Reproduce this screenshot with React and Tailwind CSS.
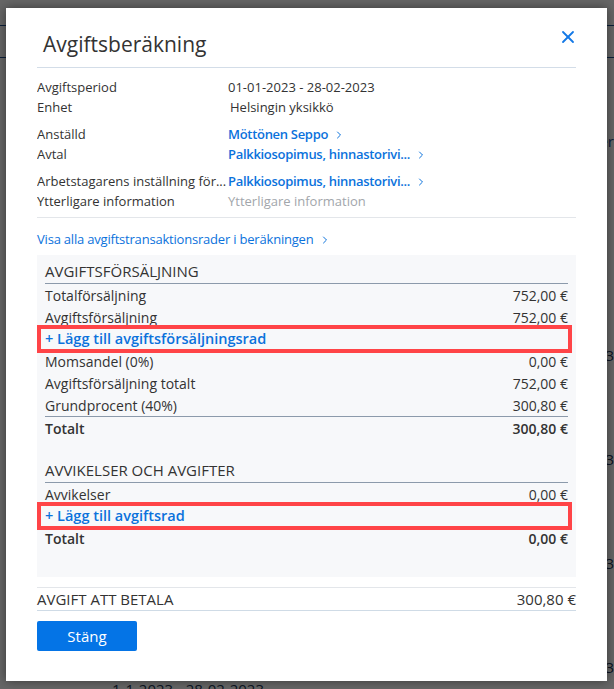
import { ChevronRight, X } from "lucide-react";

const info = [
  [
    { label: "Avgiftsperiod", value: "01-01-2023 - 28-02-2023" },
    { label: "Enhet", value: "Helsingin yksikkö", indent: true },
  ],
  [
    { label: "Anställd", value: "Möttönen Seppo", link: true },
    { label: "Avtal", value: "Palkkiosopimus, hinnastorivi...", link: true },
  ],
  [
    { label: "Arbetstagarens inställning för...", value: "Palkkiosopimus, hinnastorivi...", link: true },
    { label: "Ytterligare information", value: "Ytterligare information", muted: true },
  ],
];

const Row = ({ label, amount, bold = false }) => (
  <div className={`flex h-[22px] items-center justify-between text-[14px] ${bold ? "font-semibold" : ""}`}>
    <span>{label}</span>
    <span>{amount}</span>
  </div>
);

// red outlined "add row" action
const AddRow = ({ text }) => (
  <div className="relative flex h-[22px] items-center">
    <div className="pointer-events-none absolute -top-[3px] -bottom-[3px] -left-[8px] -right-[4px] border-[4px] border-[#ff4447]" />
    <span className="text-[14.5px] font-semibold text-[#0b72dc]">+ Lägg till {text}</span>
  </div>
);

const Heading = ({ children }) => (
  <div className="flex h-[24px] items-center border-b border-[#8c9aab] text-[15px] uppercase">
    {children}
  </div>
);

export default function App() {
  return (
    <div className="relative h-[689px] w-[614px] overflow-hidden bg-white font-['Open_Sans',sans-serif] text-[#333]">
      {/* page behind the dialog */}
      <div className="flex flex-col">
        <div className="h-[25px]" />
        <div className="h-[1px] bg-[#1d4e8f]" />
        <div className="h-[31px]" />
        <div className="h-[1px] bg-[#1d4e8f]" />
        <div className="flex h-[94px] items-end justify-end text-[15px] text-[#1d4e8f]">er</div>
        <div className="h-[110px]" />
        {[0, 1, 2, 3].map((i) => (
          <div key={i} className="flex h-[104px] items-end justify-end text-[15px] text-[#1d3557]">
            <span>2023</span>
          </div>
        ))}
        <div className="pl-[112px] text-[15px] text-[#1d3557]">1-1-2023 - 28-02-2023</div>
      </div>
      <div className="absolute inset-0 bg-[#000]/60" />

      {/* dialog */}
      <div className="absolute left-[6px] top-[8px] flex h-[673px] w-[601px] flex-col bg-white px-[31px] shadow-[0_0_10px_rgba(0,0,0,0.45)]">
        <div className="flex h-[60px] items-start justify-between border-b border-[#d3dde8]">
          <h1 className="pl-[6px] pt-[21px] text-[21px] leading-[30px] text-[#333]">Avgiftsberäkning</h1>
          <button className="mt-[19px] mr-[-2px] text-[#1479e6]" aria-label="Stäng">
            <X size={20} strokeWidth={2.2} />
          </button>
        </div>

        <div className="flex flex-col gap-[7px] border-b border-[#e3e6ea] pt-[10px] pb-[5px]">
          {info.map((group, gi) => (
            <div key={gi} className="flex flex-col">
              {group.map((r) => (
                <div key={r.label} className="flex h-[20px] items-center text-[13px]">
                  <span className="w-[191px] shrink-0 truncate">{r.label}</span>
                  {r.link ? (
                    <span className="flex items-center gap-[5px] font-semibold tracking-[-0.3px] text-[#0b72dc]">
                      {r.value}
                      <ChevronRight size={12} strokeWidth={2} />
                    </span>
                  ) : (
                    <span className={`${r.muted ? "text-[#a2a6ab]" : ""} ${r.indent ? "pl-[2px]" : ""}`}>{r.value}</span>
                  )}
                </div>
              ))}
            </div>
          ))}
        </div>

        <div className="mt-[12px] flex h-[20px] items-center gap-[5px] text-[13px] tracking-[-0.2px] text-[#0b72dc]">
          Visa alla avgiftstransaktionsrader i beräkningen
          <ChevronRight size={12} strokeWidth={2} />
        </div>

        <div className="mt-[5px] flex flex-col bg-[#f7f8fa] px-[8px] pt-[5px] pb-[28px]">
          <Heading>Avgiftsförsäljning</Heading>
          <Row label="Totalförsäljning" amount="752,00 €" />
          <Row label="Avgiftsförsäljning" amount="752,00 €" />
          <AddRow text="avgiftsförsäljningsrad" />
          <Row label="Momsandel (0%)" amount="0,00 €" />
          <Row label="Avgiftsförsäljning totalt" amount="752,00 €" />
          <div className="border-b border-[#8c9aab]">
            <Row label="Grundprocent (40%)" amount="300,80 €" />
          </div>
          <Row label="Totalt" amount="300,80 €" bold />

          <div className="mt-[20px]">
            <Heading>Avvikelser och avgifter</Heading>
          </div>
          <Row label="Avvikelser" amount="0,00 €" />
          <AddRow text="avgiftsrad" />
          <Row label="Totalt" amount="0,00 €" bold />
        </div>

        <div className="mt-[10px] flex h-[24px] items-center justify-between border-t border-b border-t-[#e3e6ea] border-b-[#cfdbe6] text-[15px]">
          <span>AVGIFT ATT BETALA</span>
          <span>300,80 €</span>
        </div>

        <div className="mt-[10px]">
          <button className="h-[30px] w-[100px] rounded-[2px] bg-[#0474e6] text-[15px] text-white">Stäng</button>
        </div>
      </div>
    </div>
  );
}
